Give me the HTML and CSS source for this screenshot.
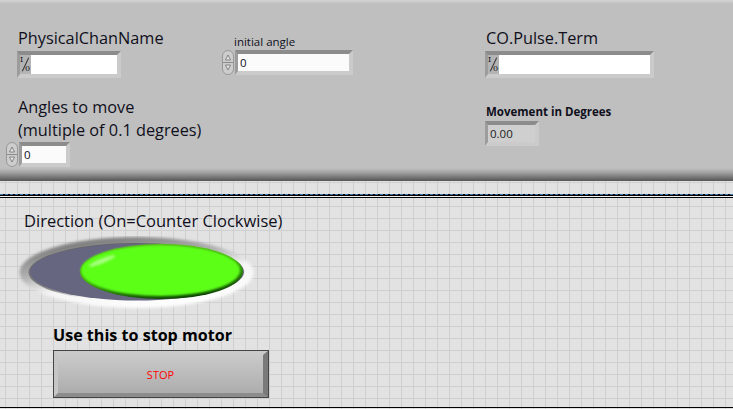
FILE: index.html
```html
<!DOCTYPE html>
<html lang="en">

<head>
    <meta charset="UTF-8">
    <title>Motor control</title>
    <link rel="stylesheet" href="styles.css">
</head>

<body>
    <div class="panel">
        <div class="col col-left">
            <div class="label big indent">PhysicalChanName</div>
            <div class="field path indent w-left">
                <span class="io"><i>I</i><b></b><i class="low">0</i></span>
                <span class="box"></span>
            </div>
            <div class="label big indent two-line">Angles to move<br>(multiple of 0.1 degrees)</div>
            <div class="numeric num-left">
                <span class="spin">
                    <svg width="13" height="25" viewBox="0 0 13 25">
                        <rect x="0.5" y="0.5" width="11" height="24" rx="5.5" fill="#cdcdcd" stroke="#989898" />
                        <line x1="1" y1="12.5" x2="11" y2="12.5" stroke="#8a8a8a" />
                        <path d="M6 5 L8.5 10 H3.5 Z" fill="#e6e6e6" stroke="#707070" stroke-width="0.8" />
                        <path d="M6 20 L8.5 15 H3.5 Z" fill="#e6e6e6" stroke="#707070" stroke-width="0.8" />
                    </svg>
                </span>
                <span class="field w-angle"><span class="box num">0</span></span>
            </div>
        </div>

        <div class="col col-mid">
            <div class="label small">initial angle</div>
            <div class="numeric">
                <span class="spin">
                    <svg width="13" height="25" viewBox="0 0 13 25">
                        <rect x="0.5" y="0.5" width="11" height="24" rx="5.5" fill="#cdcdcd" stroke="#989898" />
                        <line x1="1" y1="12.5" x2="11" y2="12.5" stroke="#8a8a8a" />
                        <path d="M6 5 L8.5 10 H3.5 Z" fill="#e6e6e6" stroke="#707070" stroke-width="0.8" />
                        <path d="M6 20 L8.5 15 H3.5 Z" fill="#e6e6e6" stroke="#707070" stroke-width="0.8" />
                    </svg>
                </span>
                <span class="field w-initial"><span class="box num">0</span></span>
            </div>
        </div>

        <div class="col col-right">
            <div class="label big">CO.Pulse.Term</div>
            <div class="field path w-right">
                <span class="io io-wide"><i>I</i><b></b><i class="low">0</i></span>
                <span class="box"></span>
            </div>
            <div class="label small bold">Movement in Degrees</div>
            <div class="field w-move"><span class="box num readout">0.00</span></div>
        </div>
    </div>

    <div class="pane">
        <div class="splitter"></div>
        <div class="label big direction">Direction (On=Counter Clockwise)</div>
        <svg class="led" width="240" height="76" viewBox="0 0 240 76">
            <defs>
                <linearGradient id="bezel" x1="0.2" y1="0" x2="0.7" y2="1">
                    <stop offset="0" stop-color="#6e6e6e" />
                    <stop offset="0.4" stop-color="#b4b4b4" />
                    <stop offset="0.6" stop-color="#f4f4f4" />
                    <stop offset="1" stop-color="#ffffff" />
                </linearGradient>
                <linearGradient id="rim" x1="0.3" y1="0" x2="0.7" y2="1">
                    <stop offset="0" stop-color="#58a81a" />
                    <stop offset="0.5" stop-color="#3ea80e" />
                    <stop offset="1" stop-color="#063c00" />
                </linearGradient>
                <linearGradient id="ring" x1="0.2" y1="0" x2="0.7" y2="1">
                    <stop offset="0" stop-color="#5a5a5a" />
                    <stop offset="0.6" stop-color="#8a8a8a" />
                    <stop offset="0.75" stop-color="#f6f6f6" />
                    <stop offset="1" stop-color="#fff" />
                </linearGradient>
                <filter id="soft" x="-10%" y="-20%" width="120%" height="140%">
                    <feGaussianBlur stdDeviation="1.5" />
                </filter>
                <filter id="softer" x="-10%" y="-20%" width="120%" height="140%">
                    <feGaussianBlur stdDeviation="1" />
                </filter>
            </defs>
            <ellipse cx="118.5" cy="36.5" rx="117" ry="35.5" fill="url(#bezel)" filter="url(#soft)" />
            <ellipse cx="118.5" cy="36.5" rx="108" ry="29.5" fill="url(#ring)" />
            <ellipse cx="119" cy="36" rx="107" ry="28.5" fill="#666680" />
            <ellipse cx="143.5" cy="35.5" rx="81.5" ry="27.5" fill="url(#rim)" />
            <ellipse cx="142.5" cy="34.5" rx="79.5" ry="25.5" fill="#5cff18" filter="url(#softer)" />
            <ellipse cx="84" cy="25" rx="14" ry="2.5" fill="#d8ffc4" opacity="0.6" transform="rotate(-22 84 25)" filter="url(#softer)" />
        </svg>
        <div class="stop-wrap">
            <div class="label stop-label">Use this to stop motor</div>
            <div class="stop-btn"><span>STOP</span></div>
        </div>
        <div class="bottom-line"></div>
    </div>
</body>

</html>
```

FILE: styles.css
```css
* {
    margin: 0;
    padding: 0;
    box-sizing: border-box;
}

body {
    width: 733px;
    height: 409px;
    overflow: hidden;
    font-family: "Open Sans", "Noto Sans", sans-serif;
    color: #10101c;
    background-color: #e2e2e2;
}

/* top grey panel */
.panel {
    display: flex;
    height: 181px;
    background: linear-gradient(#d4d4d4 0, #bfbfbf 4px, #bfbfbf 168px, #a6a6a6 172px, #555 181px);
}

.col {
    display: flex;
    flex-direction: column;
    align-items: flex-start;
}

.col-left {
    width: 222px;
    padding: 28px 0 0 6px;
}

.col-mid {
    width: 263px;
    padding: 35px 0 0 0;
}

.col-right {
    padding: 28px 0 0 0;
}

.label {
    white-space: nowrap;
}

.big {
    font-size: 16.3px;
    line-height: 20px;
}

.direction.big {
    font-size: 16.5px;
}

.small {
    font-size: 11.5px;
    line-height: 14px;
    margin-left: 12px;
}

.col-right .big {
    margin-left: 1px;
}

.col-right .small {
    margin: 27px 0 2px 1px;
}

.bold {
    font-weight: 700;
}

.indent {
    margin-left: 11px;
}

.col-left .big:first-child {
    margin-left: 12px;
}

.two-line {
    margin: 18px 0 0 12px;
    line-height: 23px;
}

/* sunken frame shared by all the controls */
.field {
    display: flex;
    height: 25px;
    border-style: solid;
    border-width: 4px 4px 4px 3px;
    border-color: #8c8c8c #cbcbcb #cbcbcb #9c9c9c;
}

.path {
    height: 27px;
    margin-top: 3px;
}

.w-left {
    width: 104px;
}

.w-right {
    width: 169px;
}

.w-angle {
    width: 51px;
}

.w-initial {
    width: 118px;
}

.w-move {
    width: 54px;
}

.box {
    flex: 1;
    background-color: #fff;
}

.num {
    font-size: 11.5px;
    line-height: 17px;
    padding-left: 2px;
    background-color: #fbfbfb;
}

.readout {
    background-color: #cfcfcf;
    color: #222;
}

/* I/O prefix of the path controls */
.io {
    position: relative;
    width: 11px;
    background-color: #b4b4b4;
    font-family: "DejaVu Serif", serif;
    font-size: 8px;
    line-height: 8px;
}

.io-wide {
    width: 11px;
}

.io i {
    position: absolute;
    left: 0;
    top: 1px;
    font-style: normal;
}

.io i.low {
    left: 5px;
    top: 10px;
}

.io b {
    position: absolute;
    left: 5px;
    top: 2px;
    width: 1px;
    height: 15px;
    background-color: #333;
    transform: rotate(25deg);
}

.numeric {
    display: flex;
    align-items: center;
    margin-top: 1px;
}

.num-left {
    margin-top: 0;
}

.spin {
    display: block;
    width: 13px;
    height: 25px;
}

/* bottom pane with the block grid */
.pane {
    height: 228px;
    background-color: #e2e2e2;
    background-image: linear-gradient(#cfcfcf 1px, transparent 1px), linear-gradient(90deg, #cfcfcf 1px, transparent 1px);
    background-size: 12px 12px;
    background-position: 5px 1px;
}

.splitter {
    height: 4px;
    position: relative;
    top: 13px;
    border-top: 1px dashed #3a78b0;
    background: linear-gradient(#000 1px, #f0f0f0 1px, #f0f0f0 2px, #000 2px);
}

.direction {
    padding: 26px 0 0 24px;
}

.led {
    display: block;
    margin: 5px 0 0 18px;
}

.stop-wrap {
    display: flex;
    flex-direction: column;
    align-items: flex-start;
    margin: 12px 0 0 53px;
}

.stop-label {
    font-size: 16.1px;
    font-weight: 700;
    line-height: 22px;
    color: #000;
}

.stop-btn {
    display: flex;
    align-items: center;
    justify-content: center;
    width: 216px;
    height: 48px;
    margin-top: 4px;
    outline: 1px solid #444;
    outline-offset: -1px;
    border-style: solid;
    border-width: 5px 6px 5px 5px;
    border-color: #cacaca #7a7a7a #8c8c8c #c6c6c6;
    background: linear-gradient(#c9c9c9, #adadad);
    color: #f00;
    font-size: 11px;
}

.bottom-line {
    height: 1px;
    margin-top: 9px;
    background-color: #000;
}
```
